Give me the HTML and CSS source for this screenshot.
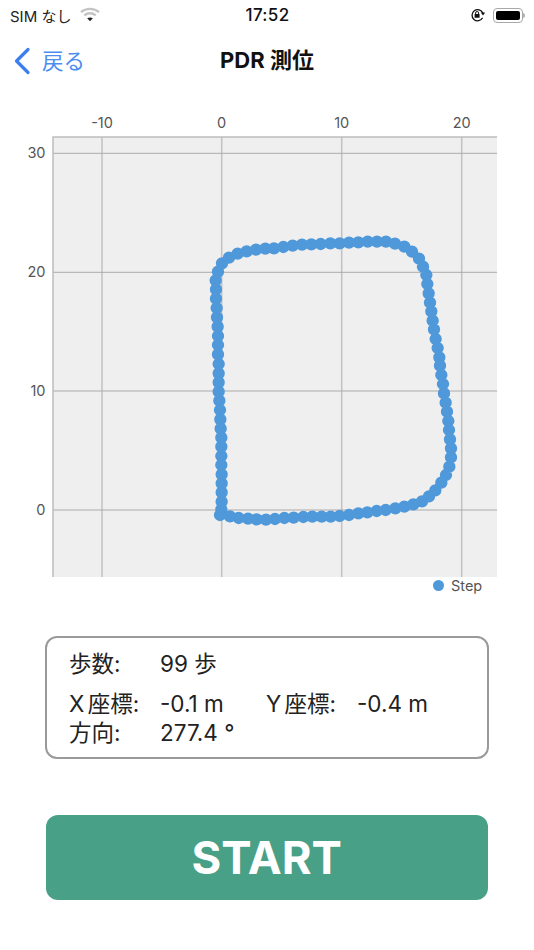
FILE: index.html
```
<!DOCTYPE html>
<html lang="ja">
<head>
<meta charset="utf-8">
<title>PDR 測位</title>
<link rel="stylesheet" href="styles.css">
</head>
<body>
<div class="status">
  <div class="status-left">
    <span>SIM なし</span>
    <svg class="wifi" width="20" height="15" viewBox="0 0 20 15">
      <path class="wifi-arc" d="M1 5.2C6 .8 14 .8 19 5.2"/>
      <path class="wifi-arc" d="M4.3 8.4C7.6 5.6 12.4 5.6 15.7 8.4"/>
      <path class="wifi-core" d="M7.2 11.3C8.8 10.2 11.2 10.2 12.8 11.3L10 14.2Z"/>
    </svg>
  </div>
  <div class="status-time">17:52</div>
  <div class="status-right">
    <svg class="rot" width="16" height="14" viewBox="0 0 16 14">
      <path class="rot-ring" d="M12.6 9.8A5.6 5.6 0 1 1 12.8 5"/>
      <path class="rot-head" d="M10.8 4.6h4.4l-2.2 2.8Z"/>
      <rect class="rot-head" x="4.6" y="6" width="5" height="3.8" rx=".6"/>
      <path class="rot-shackle" d="M5.6 6V5a1.5 1.5 0 0 1 3 0v1"/>
    </svg>
    <div class="battery"><div class="battery-fill"></div></div>
    <div class="battery-nub"></div>
  </div>
</div>

<nav class="nav">
  <a class="back">
    <svg width="18" height="28" viewBox="0 0 18 28"><path class="chevron" d="M15 2.5 3.5 14 15 25.5"/></svg>
    <span>戻る</span>
  </a>
  <h1 class="title">PDR 測位</h1>
</nav>

<svg class="chart" width="534" height="495" viewBox="0 105 534 495">
  <rect class="plot" x="53" y="137" width="444" height="440"/>
  <g class="grid-v">
    <path d="M102 137V577M221.7 137V577M341.7 137V577M461.7 137V577"/>
  </g>
  <g class="grid-h">
    <path d="M53 153.3H497M53 272.3H497M53 391H497M53 510H497"/>
  </g>
  <path class="axis" d="M53 577V137H497"/>
  <g class="tick tick-x">
    <text x="102" y="128">-10</text>
    <text x="221.7" y="128">0</text>
    <text x="341.7" y="128">10</text>
    <text x="461.7" y="128">20</text>
  </g>
  <g class="tick tick-y">
    <text x="45.5" y="158">30</text>
    <text x="45.5" y="277">20</text>
    <text x="45.5" y="395.5">10</text>
    <text x="45.5" y="514.5">0</text>
  </g>
  <g class="dots">
    <path transform="translate(20 360) scale(.33333)" d="M738 479h0M710 478h0M684 476h0M656 474h0M630 469h0M600 465h0M604 448h0M605 425h0M605 397h0M605 370h0M605 343h0M604 315h0M604 288h0M604 260h0M604 233h0M602 206h0M601 178h0M600 150h0M598 122h0M596 95h0M596 67h0M596 40h0M596 12h0"/>
    <path transform="translate(20 110) scale(.33333)" d="M594 733h0M594 705h0M594 678h0M593 650h0M591 622h0M590 594h0M588 566h0M588 538h0M587 511h0M594 485h0M606 460h0M627 443h0M653 431h0M680 424h0M708 419h0M736 416h0"/>
    <path transform="translate(270 110) scale(.33333)" d="M12 415h0M40 411h0M68 407h0M96 404h0M124 403h0M152 402h0M181 400h0M209 400h0M237 398h0M265 397h0M293 395h0M321 395h0M348 395h0M375 401h0M403 410h0M426 425h0M447 446h0M459 470h0M469 495h0M472 522h0M476 550h0M480 578h0M484 604h0M488 632h0M492 658h0M497 687h0M503 714h0M508 742h0"/>
    <path transform="translate(270 360) scale(.33333)" d="M510 17h0M514 45h0M519 72h0M522 100h0M527 128h0M531 155h0M535 183h0M537 210h0M540 238h0M543 265h0M543 292h0M538 320h0M528 345h0M514 368h0M496 391h0M477 409h0M456 424h0M430 433h0M403 440h0M376 445h0M347 450h0M320 453h0M292 457h0M265 460h0M237 465h0M209 468h0M182 470h0M155 470h0M127 470h0M100 471h0M71 473h0M43 474h0M15 477h0"/>
  </g>
  <circle class="legend-dot" cx="438.5" cy="585.5" r="5.5"/>
  <text class="legend-label" x="451" y="591">Step</text>
</svg>

<section class="info">
  <div class="row row-steps">
    <span class="label">歩数:</span><span class="value">99 歩</span>
  </div>
  <div class="row row-xy">
    <span class="label">X 座標:</span><span class="value value-x">-0.1 m</span>
    <span class="label label-y">Y 座標:</span><span class="value">-0.4 m</span>
  </div>
  <div class="row row-dir">
    <span class="label">方向:</span><span class="value">277.4 °</span>
  </div>
</section>

<button class="start">START</button>
</body>
</html>
```

FILE: styles.css
```
* { box-sizing: border-box; }
html, body { margin: 0; padding: 0; background: #fff; }
body {
  width: 534px;
  height: 950px;
  overflow: hidden;
  font-family: Inter, "Noto Sans CJK JP", sans-serif;
  color: #1a1a1a;
}

.status {
  height: 28px;
  display: grid;
  grid-template-columns: 1fr auto 1fr;
  align-items: center;
  font-size: 15px;
  padding: 2px 9px 0 10px;
}
.status-left { display: flex; align-items: center; gap: 9px; color: #222; }
.wifi { display: block; margin-top: -1px; }
.wifi-arc { fill: none; stroke: #c4c4c4; stroke-width: 2.4; }
.wifi-core { fill: #222; }
.status-time { font-size: 17px; font-weight: 500; color: #111; letter-spacing: .3px; }
.status-right { display: flex; align-items: center; justify-content: flex-end; }
.rot { display: block; margin-right: 7px; }
.rot-ring { fill: none; stroke: #111; stroke-width: 1.3; }
.rot-head { fill: #111; }
.rot-shackle { fill: none; stroke: #111; stroke-width: 1; }
.battery {
  width: 30px;
  height: 15px;
  border: 1px solid #a8a8a8;
  border-radius: 4px;
  padding: 2px;
}
.battery-fill { width: 100%; height: 100%; background: #000; border-radius: 2px; }
.battery-nub { width: 2px; height: 5px; background: #b5b5b5; border-radius: 0 2px 2px 0; }

.nav {
  height: 60px;
  display: flex;
  align-items: center;
  justify-content: center;
  position: relative;
}
.back {
  position: absolute;
  left: 13px;
  top: 16px;
  display: flex;
  align-items: center;
  gap: 11px;
  font-size: 21.5px;
  color: #4c8df0;
}
.back svg { display: block; margin-top: 2px; }
.chevron { fill: none; stroke: #3a7ef0; stroke-width: 3.2; stroke-linecap: round; stroke-linejoin: round; }
.title { margin: 0; font-size: 22px; font-weight: 700; color: #111; }

.chart { display: block; margin-top: 17px; }
.plot { fill: #efefef; }
.grid-v path { fill: none; stroke: #c2c2c2; stroke-width: 1.5; }
.grid-h path { fill: none; stroke: #ababab; stroke-width: 1; }
.axis { fill: none; stroke: #bdbdbd; stroke-width: 1.5; }
.tick text, .legend-label { font-family: Inter, sans-serif; font-size: 14.5px; fill: #555; }
.tick-x text { text-anchor: middle; }
.tick-y text { text-anchor: end; }
.dots path { fill: none; stroke: #4f98da; stroke-width: 37; stroke-linecap: round; }
.legend-dot { fill: #4f98da; }

.info {
  width: 444px;
  height: 123px;
  margin: 36px 0 0 45px;
  border: 2px solid #9a9a9a;
  border-radius: 12px;
  padding: 0 0 0 22px;
  font-size: 22.5px;
  color: #222;
}
.row { display: flex; align-items: baseline; height: 29px; white-space: nowrap; }
.row-steps { margin-top: 8px; }
.row-xy { margin-top: 11px; }
.label { width: 91px; word-spacing: -3px; }
.value-x { width: 106px; }
.label-y { width: 91px; }

.start {
  display: block;
  width: 442.5px;
  height: 85px;
  margin: 56px 0 0 45.5px;
  border: 0;
  border-radius: 12px;
  background: #48a086;
  color: #fff;
  font-family: Inter, sans-serif;
  font-size: 45.5px;
  font-weight: 700;
}
```
